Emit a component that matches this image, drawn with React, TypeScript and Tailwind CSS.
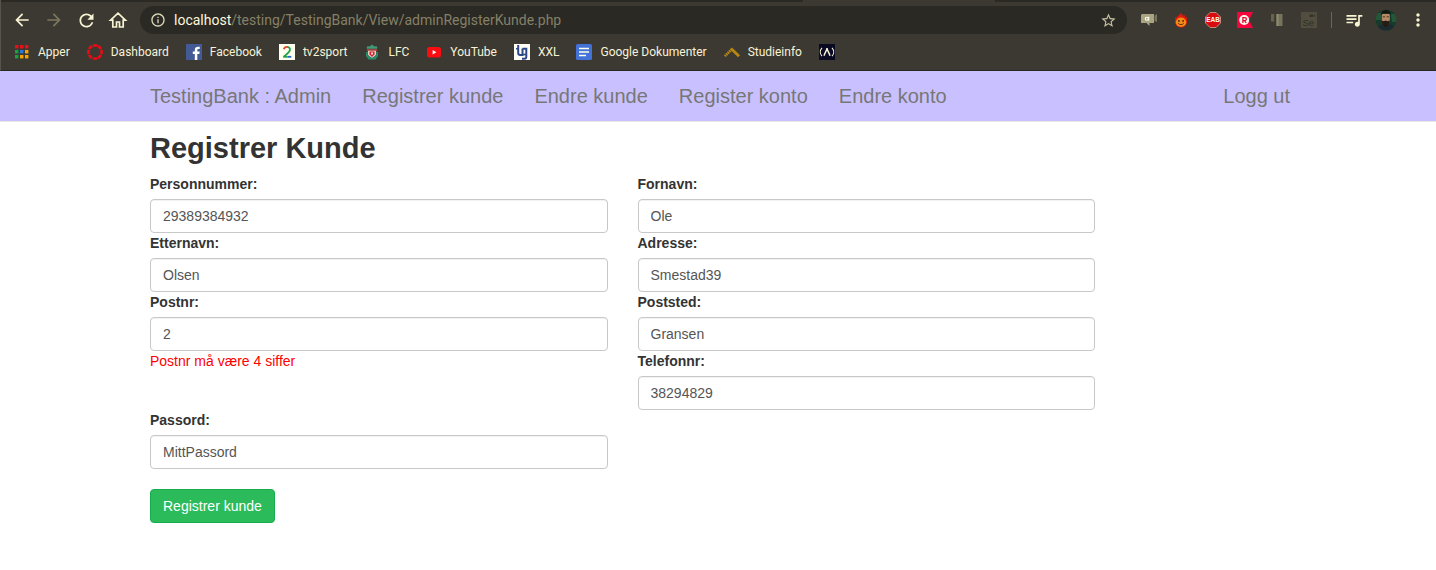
import type { ReactNode } from "react";
import {
  MdArrowBack,
  MdArrowForward,
  MdMoreVert,
  MdOutlineInfo,
  MdQueueMusic,
  MdRefresh,
  MdStarBorder,
} from "react-icons/md";

function HomeIcon() {
  return (
    <svg viewBox="0 0 20 20" className="size-5" fill="none" stroke="currentColor" strokeWidth="1.700">
      <path d="M2.600 10.200H4.800V17h3.700v-5h3v5h3.700v-6.800h2.200L10 3.200z" />
    </svg>
  );
}

function AppsIcon() {
  const colours = ["#e8101c", "#e8101c", "#e8101c", "#16a34a", "#2b78d8", "#f7a600", "#16a34a", "#f7a600", "#f7a600"];
  return (
    <svg viewBox="0 0 16 16" className="size-4">
      {colours.map((fill, i) => (
        <rect key={i} x={1 + (i % 3) * 5} y={1 + Math.floor(i / 3) * 5} width="3.400" height="3.400" fill={fill} />
      ))}
    </svg>
  );
}

function DashboardIcon() {
  return (
    <svg viewBox="0 0 16 16" className="size-4">
      <circle cx="8" cy="8" r="6.600" fill="none" stroke="#e90c14" strokeWidth="2.600" strokeDasharray="4.300 0.880" strokeDashoffset="2.150" />
    </svg>
  );
}

function FacebookIcon() {
  return (
    <svg viewBox="0 0 16 16" className="size-4">
      <rect width="16" height="16" fill="#445a96" />
      <path d="M8.800 16V10H6.800V7.600h2V6c0-2.300 1.300-3.300 3.200-3.300h1.700V5h-1.200c-.9 0-1.200.4-1.200 1.200v1.400h2.400L13.300 10h-2v6z" fill="#fff" />
    </svg>
  );
}

function Tv2Icon() {
  return (
    <svg viewBox="0 0 16 16" className="size-4" fill="none" strokeWidth="1.800">
      <rect width="16" height="16" fill="#fffff0" />
      <path d="M4.800 5.200C5.300 3.500 6.700 2.900 8 2.900" stroke="#e3472c" />
      <path d="M8 2.900c2 0 3.200 1.300 3 3-.2 1.900-2 3.200-6.200 6.900" stroke="#25a244" />
      <path d="M4.200 12.800h4.300" stroke="#25a244" />
      <path d="M8.500 12.800h3.800" stroke="#2168c9" />
    </svg>
  );
}

function LfcIcon() {
  return (
    <svg viewBox="0 0 16 16" className="size-4">
      <path d="M6 2.200 8 .5l2 1.700 3.200.3v2.300H2.800V2.500z" fill="#3f9a78" />
      <path d="M3 5.200h10v2H3z" fill="#b5403c" />
      <path d="M4 6.800h8V11l-4 3.500L4 11z" fill="#e3cfc2" />
      <path d="M5.500 7.500h5v2.800L8 13l-2.500-2.700z" fill="#d5202f" />
      <path d="M7 8.500h2v1.600l-1 .9-1-.9z" fill="#f4d9cf" />
      <path d="M2 8h1.800v3l2.400 2.500h3.600l2.400-2.500V8H14v4l-2.500 3.500h-7L2 12z" fill="#23906d" />
    </svg>
  );
}

function YouTubeIcon() {
  return (
    <svg viewBox="0 0 16 16" className="size-4">
      <rect x="1" y="3" width="14" height="10.500" rx="2.500" fill="#f90d10" />
      <path d="M6.600 6v4.500l3.800-2.250z" fill="#fff" />
    </svg>
  );
}

function XxlIcon() {
  return (
    <svg viewBox="0 0 16 16" className="size-4" fill="none" stroke="#2c4a8a" strokeWidth="2">
      <rect width="16" height="16" fill="#fffff8" stroke="none" />
      <path d="M4.200 1v8c0 1.400.7 2 2 2H8.500V4.500" />
      <path d="M2 4.800h2" strokeWidth="1.400" />
      <path d="M8.500 4.800h3.800v8c0 1.300-.7 2-2 2H8" />
      <path d="M8.500 10.500h3.800" strokeWidth="1.600" />
    </svg>
  );
}

function DocsIcon() {
  return (
    <svg viewBox="0 0 16 16" className="size-4">
      <rect width="16" height="16" rx="1.500" fill="#4272d7" />
      <path d="M3 4.500h10M3 8h10M3 11.500h7" stroke="#fffff0" strokeWidth="1.600" />
    </svg>
  );
}

function StudieIcon() {
  return (
    <svg viewBox="0 0 16 16" className="size-4" fill="none" stroke="#b88711">
      <path d="M.8 12.200 7.500 5.500" strokeWidth="2.600" strokeDasharray="1.600 .5" />
      <path d="M7 4.500l8 7.800" strokeWidth="2.800" />
    </svg>
  );
}

function CampIcon() {
  return (
    <svg viewBox="0 0 16 16" className="size-4" fill="none" stroke="#f7f3dc" strokeWidth="1.100">
      <rect width="16" height="16" fill="#0b0a23" stroke="none" />
      <path d="M3 3.800C.8 6.200.8 9.800 3 12.200M13 3.800c2.200 2.400 2.200 6 0 8.400" />
      <path d="M5.200 11.800C5 9.200 7.800 7.500 8 4c.2 3.500 3 5.200 2.800 7.800" strokeWidth="1.500" />
    </svg>
  );
}

function ChatExtension() {
  return (
    <svg viewBox="0 0 16 16" className="size-4">
      <path d="M1 2h12v9H8.500v3L5.500 11H0V3z" fill="#a9a583" />
      <path d="M13.500 3.500 16 2v8l-2.500-1z" fill="#77745c" />
      <circle cx="5.800" cy="6.800" r="1.500" fill="none" stroke="#fffff0" strokeWidth="1.100" />
      <path d="M7.700 4.800v3.900" stroke="#fffff0" strokeWidth="1.100" />
    </svg>
  );
}

function FlameExtension() {
  return (
    <svg viewBox="0 0 16 16" className="size-4">
      <path d="M8 .3c.3 1.700 1.300 2.500 2 3.500.6-.4.8-.9.900-1.600 1 1.200 1 2.300 1.300 3.300l1.600-.8c-.2 1.500.4 2.700.3 4.800C14 13 11.500 15.500 8 15.500S2 13 2 9.500c0-2 .5-3.300.2-4.800l1.700.8C4.500 3.500 7.500 3 8 .3z" fill="#e0180e" />
      <ellipse cx="8" cy="10.200" rx="5.200" ry="4.600" fill="#f28b18" />
      <circle cx="5.900" cy="8.900" r=".9" fill="#3b1d0a" />
      <circle cx="10.100" cy="8.900" r=".9" fill="#3b1d0a" />
      <path d="M5.200 11.400c1.500 1.600 4.100 1.600 5.600 0" fill="none" stroke="#5b280b" strokeWidth=".9" />
    </svg>
  );
}

function EabExtension() {
  return (
    <svg viewBox="0 0 16 16" className="size-4">
      <path d="M5 .5h6L15.500 5v6L11 15.500H5L.5 11V5z" fill="#d90b0f" stroke="#d8a290" strokeWidth=".8" />
      <text x="8" y="10.400" textAnchor="middle" fontSize="6.500" fontWeight="700" fill="#fff6e8" fontFamily="Liberation Sans, sans-serif">
        EAB
      </text>
    </svg>
  );
}

function RakutenExtension() {
  return (
    <svg viewBox="0 0 16 16" className="size-4">
      <path d="M0 0h16l-4 8 4 8H0z" fill="#f5053d" />
      <circle cx="7.200" cy="8" r="5" fill="#fff8e8" />
      <path d="M5.900 11V5.600h1.900c2.100 0 2.100 3 0 3H6M7.600 8.600 9.200 11" fill="none" stroke="#e0063a" strokeWidth="1.300" />
    </svg>
  );
}

function BlocksExtension() {
  return (
    <svg viewBox="0 0 16 16" className="size-4">
      <path d="M2 2h3.200v7.500H2z" fill="#66624e" />
      <path d="M7.500 2h6v12h-6z" fill="#77735c" />
      <path d="M7.500 2h2v12h-2z" fill="#918c70" />
    </svg>
  );
}

function SeleniumExtension() {
  return (
    <svg viewBox="0 0 16 16" className="size-4">
      <rect width="16" height="16" fill="#514e3f" />
      <path d="M8.500 2.500h3.800v2.600H8.500zM12.500 3.800 14.300 2.500v2.600z" fill="#36332a" />
      <text x="1.500" y="13.800" fontSize="9.500" fill="#2f2d25" fontFamily="Liberation Sans, sans-serif">
        Se
      </text>
    </svg>
  );
}

function Avatar() {
  return (
    <svg viewBox="0 0 22 22" className="size-[22px]">
      <clipPath id="avatar-clip">
        <circle cx="11" cy="11" r="10.500" />
      </clipPath>
      <g clipPath="url(#avatar-clip)">
        <rect width="22" height="22" fill="#173b2a" />
        <path d="M0 4h6v7H0zM16 5h6v8h-5z" fill="#24573a" />
        <path d="M2 22c.5-5 4-7 7-7.500h4c4 .5 6 3 7 7.500z" fill="#1b2a31" />
        <path d="M6.800 5h8v7c0 3-2 5-4 5s-4-2-4-5z" fill="#b58a66" />
        <path d="M6.300 6.500C6 2.500 8.500 1.200 11 1.200s5 1.300 4.500 5.300L14 4.200H8z" fill="#17130f" />
        <path d="M6.800 11.500l2 .8 2-.8 2 .8 2-.8v2c-1 3-2.500 4.500-4 4.500s-3-1.500-4-4.500z" fill="#261b14" />
        <path d="M7.800 7.800h2.300M11.700 7.800h2.300" stroke="#4a3220" strokeWidth=".9" />
      </g>
    </svg>
  );
}

function ToolbarButton({ label, muted, children }: { label: string; muted?: boolean; children: ReactNode }) {
  return (
    <button
      type="button"
      aria-label={label}
      className={`flex w-8 shrink-0 items-center justify-center ${muted ? "text-[#7c785f]" : "text-[#f8f4d3]"}`}
    >
      {children}
    </button>
  );
}

const bookmarks: { name: string; icon: ReactNode }[] = [
  { name: "Apper", icon: <AppsIcon /> },
  { name: "Dashboard", icon: <DashboardIcon /> },
  { name: "Facebook", icon: <FacebookIcon /> },
  { name: "tv2sport", icon: <Tv2Icon /> },
  { name: "LFC", icon: <LfcIcon /> },
  { name: "YouTube", icon: <YouTubeIcon /> },
  { name: "XXL", icon: <XxlIcon /> },
  { name: "Google Dokumenter", icon: <DocsIcon /> },
  { name: "Studieinfo", icon: <StudieIcon /> },
];

function BrowserChrome() {
  return (
    <header className="border-b border-l border-b-[#292721] border-l-[#57544c] bg-[#3c3932] font-[Roboto,sans-serif]">
      <div className="flex h-0.5 bg-[#2a2923]">
        <div className="w-[802px]" />
        <div className="w-48 bg-[#3c3932]" />
      </div>
      <div className="flex h-9 items-center pr-0.5 pl-[5px]">
        <ToolbarButton label="Tilbake">
          <MdArrowBack size={20} />
        </ToolbarButton>
        <ToolbarButton label="Fremover" muted>
          <MdArrowForward size={20} />
        </ToolbarButton>
        <ToolbarButton label="Last inn på nytt">
          <MdRefresh size={21} />
        </ToolbarButton>
        <ToolbarButton label="Startside">
          <HomeIcon />
        </ToolbarButton>
        <div className="ml-1.5 flex h-7 flex-1 items-center rounded-full bg-[#2a2923] px-2.5">
          <MdOutlineInfo size={16} className="text-[#dcd8ba]" />
          <p className="ml-2 flex-1 text-sm text-[#858068]">
            <span className="text-[#fbf8dc]">localhost</span>/testing/TestingBank/View/adminRegisterKunde.php
          </p>
          <button type="button" aria-label="Legg til bokmerke" className="text-[#c5c1a2]">
            <MdStarBorder size={17} />
          </button>
        </div>
        <div className="ml-1.5 flex items-center">
          <ToolbarButton label="Chat"><ChatExtension /></ToolbarButton>
          <ToolbarButton label="Flamme"><FlameExtension /></ToolbarButton>
          <ToolbarButton label="Annonseblokkering"><EabExtension /></ToolbarButton>
          <ToolbarButton label="Tilbud"><RakutenExtension /></ToolbarButton>
          <ToolbarButton label="Blokker"><BlocksExtension /></ToolbarButton>
          <ToolbarButton label="Selenium"><SeleniumExtension /></ToolbarButton>
          <span className="mx-1.5 h-4 w-px bg-[#6b6757]" />
          <ToolbarButton label="Mediekontroll">
            <MdQueueMusic size={20} />
          </ToolbarButton>
          <ToolbarButton label="Profil"><Avatar /></ToolbarButton>
          <ToolbarButton label="Meny">
            <MdMoreVert size={20} />
          </ToolbarButton>
        </div>
      </div>
      <nav aria-label="Bokmerker" className="flex h-8 items-center gap-[17px] pb-1 pl-[13px] text-xs text-[#f7f3d8]">
        {bookmarks.map(({ name, icon }) => (
          <a key={name} href="#" className="flex items-center gap-2 whitespace-nowrap">
            {icon}
            {name}
          </a>
        ))}
        <a href="#" aria-label="freeCodeCamp"><CampIcon /></a>
      </nav>
    </header>
  );
}

function Field({ id, label, value }: { id: string; label: string; value: string }) {
  return (
    <div>
      <label htmlFor={id} className="mb-[5px] block font-bold">
        {label}
      </label>
      <input
        id={id}
        type="text"
        defaultValue={value}
        className="block h-[34px] w-full rounded border border-[#c8c8c8] px-3 text-[#555] inset-shadow-2xs"
      />
    </div>
  );
}

const links = ["Registrer kunde", "Endre kunde", "Register konto", "Endre konto"];

export default function App() {
  return (
    <div className="min-h-screen bg-white font-['Liberation_Sans',Arial,sans-serif] text-sm leading-5 text-[#333]">
      <BrowserChrome />
      <nav className="border-b border-[#e7e7e7] bg-[#c9c1ff] pl-1 text-xl leading-5 text-[#777]">
        <div className="mx-auto flex max-w-[1170px] items-center gap-px">
          <a href="#" className="p-[15px]">TestingBank : Admin</a>
          {links.map((link) => (
            <a key={link} href="#" className="p-[15px]">{link}</a>
          ))}
          <a href="#" className="ml-auto p-[15px]">Logg ut</a>
        </div>
      </nav>
      <main className="pl-1">
        <div className="mx-auto max-w-[1170px] px-[15px] pt-2.5">
          <h2 className="mb-2.5 text-[29px] leading-8 font-bold">Registrer Kunde</h2>
          <form className="max-w-[945px]" onSubmit={(e) => e.preventDefault()}>
            <div className="grid grid-cols-2 gap-x-[30px]">
              <Field id="personnr" label="Personnummer:" value="29389384932" />
              <Field id="fornavn" label="Fornavn:" value="Ole" />
              <Field id="etternavn" label="Etternavn:" value="Olsen" />
              <Field id="adresse" label="Adresse:" value="Smestad39" />
              <Field id="postnr" label="Postnr:" value="2" />
              <Field id="poststed" label="Poststed:" value="Gransen" />
              <p role="alert" className="text-[#f00]">Postnr må være 4 siffer</p>
              <Field id="telefonnr" label="Telefonnr:" value="38294829" />
              <Field id="passord" label="Passord:" value="MittPassord" />
            </div>
            <button type="submit" className="mt-5 h-[34px] rounded border border-[#16ad4d] bg-[#2bbb5b] px-3 text-white">
              Registrer kunde
            </button>
          </form>
        </div>
      </main>
    </div>
  );
}
